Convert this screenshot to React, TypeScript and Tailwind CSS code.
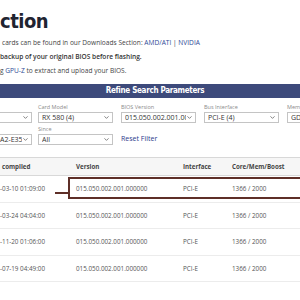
import { ChevronDown } from "lucide-react";

const rows = [
  { date: "-03-10 01:09:00", version: "015.050.002.001.000000", bus: "PCI-E", clocks: "1366 / 2000" },
  { date: "-03-24 04:04:00", version: "015.050.002.001.000000", bus: "PCI-E", clocks: "1366 / 2000" },
  { date: "-11-20 01:06:00", version: "015.050.002.001.000000", bus: "PCI-E", clocks: "1366 / 2000" },
  { date: "-07-19 04:49:00", version: "015.050.002.001.000000", bus: "PCI-E", clocks: "1366 / 2000" },
];

function Select({ value, className = "" }: { value: string; className?: string }) {
  return (
    <div
      className={`flex h-[11px] items-center border border-[#c4c4c4] bg-white pl-[3px] pr-[2px] text-[7px] leading-[9px] text-[#333] ${className}`}
    >
      <span className="flex-1 overflow-hidden whitespace-nowrap">{value}</span>
      <ChevronDown size={7} strokeWidth={2.5} className="shrink-0 text-[#555]" />
    </div>
  );
}

function Field({ label, value }: { label: string; value: string }) {
  return (
    <div className="w-[75px] shrink-0">
      <p className="mb-[1px] h-[8px] text-[5.5px] leading-[8px] text-[#8a8a8a]">{label}</p>
      <Select value={value} />
    </div>
  );
}

export default function App() {
  return (
    <div className="relative h-[300px] w-[300px] overflow-hidden bg-white font-['Open_Sans',sans-serif] text-[#444]">
      {/* Title */}
      <h1 className="mt-[9px] h-[24px] font-['DejaVu_Sans_Condensed','Roboto',sans-serif] text-[20px] font-bold leading-[24px] tracking-[-0.5px] text-[#1f2431]">
        ction
      </h1>

      {/* Intro text */}
      <div className="mt-[3px] whitespace-nowrap text-[6.6px] leading-[14px] text-[#444]">
        <p className="pl-[2px]">
          cards can be found in our Downloads Section: <span className="text-[#2d4a96]">AMD/ATI</span> |{" "}
          <span className="text-[#2d4a96]">NVIDIA</span>
        </p>
        <p className="font-semibold text-[#333]">backup of your original BIOS before flashing.</p>
        <p>
          g <span className="text-[#2d4a96]">GPU-Z</span> to extract and upload your BIOS.
        </p>
      </div>

      {/* Filter header */}
      <div className="mt-[6px] flex h-[14px] items-center justify-center bg-[#3d4a7b] pl-[10px] font-['DejaVu_Sans_Condensed','Roboto',sans-serif] text-[8px] font-bold tracking-[-0.3px] text-white">
        Refine Search Parameters
      </div>

      {/* Filters */}
      <div className="pt-[5px]">
        <div className="flex">
          <div className="mr-[6px] w-[32px] shrink-0">
            <p className="mb-[1px] h-[8px]" />
            <div className="flex h-[11px] items-center justify-end border-y border-r border-[#c4c4c4] pr-[2px]">
              <ChevronDown size={7} strokeWidth={2.5} className="text-[#555]" />
            </div>
          </div>
          <div className="flex gap-[8px]">
            <Field label="Card Model" value="RX 580 (4)" />
            <Field label="BIOS Version" value="015.050.002.001.000000 (4)" />
            <Field label="Bus Interface" value="PCI-E (4)" />
            <Field label="Memory Type" value="GDDR5 (4)" />
          </div>
        </div>

        <div className="mt-[2px] flex">
          <div className="mr-[6px] w-[32px] shrink-0">
            <p className="mb-[1px] h-[8px]" />
            <div className="flex h-[11px] items-center border-y border-r border-[#c4c4c4] pr-[2px] text-[7px] leading-[9px] text-[#333]">
              <span className="flex-1 overflow-hidden whitespace-nowrap">A2-E35:</span>
              <ChevronDown size={7} strokeWidth={2.5} className="shrink-0 text-[#555]" />
            </div>
          </div>
          <div className="flex gap-[8px]">
            <Field label="Since" value="All" />
            <div className="flex w-[75px] items-end pb-[1px]">
              <span className="text-[7px] leading-[10px] text-[#2b3a8c]">Reset Filter</span>
            </div>
          </div>
        </div>
      </div>

      {/* Table */}
      <div className="mt-[12px] border-t border-[#d8d8d8]">
        <div className="flex h-[18px] items-center border-b border-[#d8d8d8] bg-[#f6f6f6] text-[6.2px] font-bold text-[#444]">
          <span className="w-[76px] pl-[2px]">compiled</span>
          <span className="w-[107px]">Version</span>
          <span className="w-[49px]">Interface</span>
          <span>Core/Mem/Boost</span>
        </div>
        {rows.map((r, i) => (
          <div
            key={i}
            className="flex h-[26.5px] items-center border-b border-[#ececec] text-[6.3px] text-[#555]"
          >
            <span className="w-[76px]">{r.date}</span>
            <span className="w-[107px]">{r.version}</span>
            <span className="w-[49px]">{r.bus}</span>
            <span>{r.clocks}</span>
          </div>
        ))}
      </div>

      {/* Highlight callout on the first row */}
      <div className="absolute left-[55px] top-[192px] h-[2px] w-[14px] bg-[#5e2f28]" />
      <div className="absolute left-[68px] top-[177px] h-[22px] w-[250px] border-2 border-[#5e2f28]" />
    </div>
  );
}
